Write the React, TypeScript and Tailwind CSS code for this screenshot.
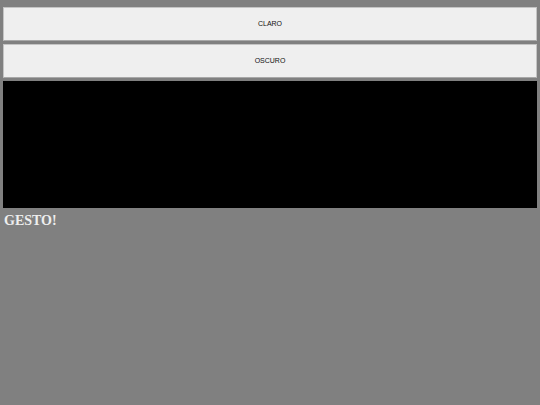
export default function App() {
  return (
    <main className="min-h-screen bg-[#808080] px-[3px] pt-[7px]" style={{ fontFamily: '"Liberation Sans", Arial, sans-serif' }}>
      <button className="mb-[3px] flex h-[34px] w-full items-center justify-center border border-[#c4c4c4] border-b-[#a8a8a8] bg-[#efefef] text-[7px] text-[#111]">
        CLARO
      </button>
      <button className="mb-[3px] flex h-[34px] w-full items-center justify-center border border-[#c4c4c4] border-b-[#a8a8a8] bg-[#efefef] text-[7px] text-[#111]">
        OSCURO
      </button>
      <div className="h-[127px] w-full bg-black" />
      <h1
        className="mt-[3px] pl-[1px] text-[14px] font-bold leading-[20px] text-[#eeeeee]"
        style={{ fontFamily: '"Liberation Serif", "Times New Roman", serif' }}
      >
        GESTO!
      </h1>
    </main>
  )
}
